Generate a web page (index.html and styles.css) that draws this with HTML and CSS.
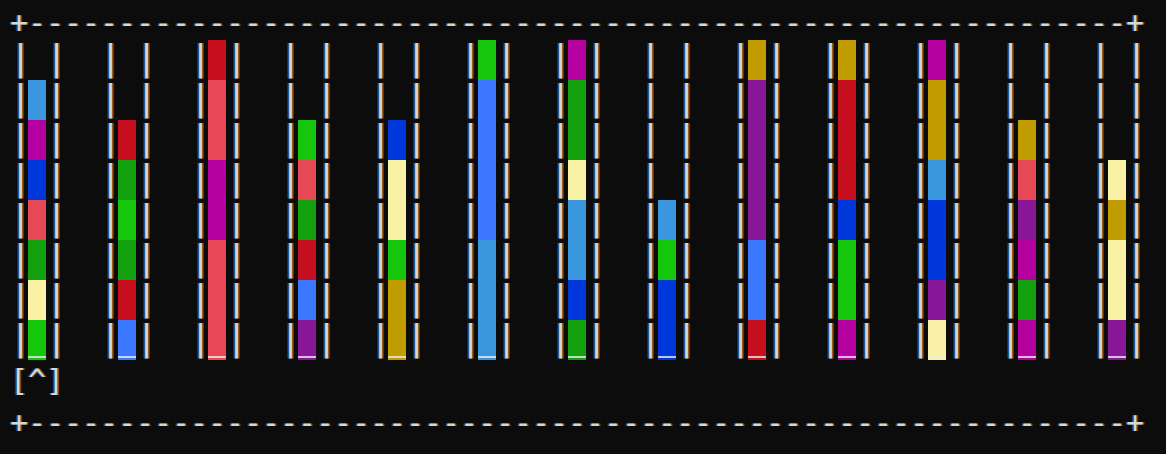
FILE: index.html
```html
<!DOCTYPE html>
<html>
<head>
<meta charset="utf-8">
<link rel="stylesheet" href="styles.css">
</head>
<body>
<div class="term">
  <div class="line border">+-------------------------------------------------------------+</div>
  <div class="tubes">
    <div class="tube"><div class="wall"><span>|</span><span>|</span><span>|</span><span>|</span><span>|</span><span>|</span><span>|</span><span>|</span></div><div class="fill"><i class="e"></i><i class="cy"></i><i class="mg"></i><i class="bl"></i><i class="br"></i><i class="gn"></i><i class="by"></i><i class="bg"></i></div><div class="wall"><span>|</span><span>|</span><span>|</span><span>|</span><span>|</span><span>|</span><span>|</span><span>|</span></div></div>
    <div class="tube"><div class="wall"><span>|</span><span>|</span><span>|</span><span>|</span><span>|</span><span>|</span><span>|</span><span>|</span></div><div class="fill"><i class="e"></i><i class="e"></i><i class="rd"></i><i class="gn"></i><i class="bg"></i><i class="gn"></i><i class="rd"></i><i class="bb"></i></div><div class="wall"><span>|</span><span>|</span><span>|</span><span>|</span><span>|</span><span>|</span><span>|</span><span>|</span></div></div>
    <div class="tube"><div class="wall"><span>|</span><span>|</span><span>|</span><span>|</span><span>|</span><span>|</span><span>|</span><span>|</span></div><div class="fill"><i class="rd"></i><i class="br"></i><i class="br"></i><i class="mg"></i><i class="mg"></i><i class="br"></i><i class="br"></i><i class="br"></i></div><div class="wall"><span>|</span><span>|</span><span>|</span><span>|</span><span>|</span><span>|</span><span>|</span><span>|</span></div></div>
    <div class="tube"><div class="wall"><span>|</span><span>|</span><span>|</span><span>|</span><span>|</span><span>|</span><span>|</span><span>|</span></div><div class="fill"><i class="e"></i><i class="e"></i><i class="bg"></i><i class="br"></i><i class="gn"></i><i class="rd"></i><i class="bb"></i><i class="pu"></i></div><div class="wall"><span>|</span><span>|</span><span>|</span><span>|</span><span>|</span><span>|</span><span>|</span><span>|</span></div></div>
    <div class="tube"><div class="wall"><span>|</span><span>|</span><span>|</span><span>|</span><span>|</span><span>|</span><span>|</span><span>|</span></div><div class="fill"><i class="e"></i><i class="e"></i><i class="bl"></i><i class="by"></i><i class="by"></i><i class="bg"></i><i class="ye"></i><i class="ye"></i></div><div class="wall"><span>|</span><span>|</span><span>|</span><span>|</span><span>|</span><span>|</span><span>|</span><span>|</span></div></div>
    <div class="tube"><div class="wall"><span>|</span><span>|</span><span>|</span><span>|</span><span>|</span><span>|</span><span>|</span><span>|</span></div><div class="fill"><i class="bg"></i><i class="bb"></i><i class="bb"></i><i class="bb"></i><i class="bb"></i><i class="cy"></i><i class="cy"></i><i class="cy"></i></div><div class="wall"><span>|</span><span>|</span><span>|</span><span>|</span><span>|</span><span>|</span><span>|</span><span>|</span></div></div>
    <div class="tube"><div class="wall"><span>|</span><span>|</span><span>|</span><span>|</span><span>|</span><span>|</span><span>|</span><span>|</span></div><div class="fill"><i class="mg"></i><i class="gn"></i><i class="gn"></i><i class="by"></i><i class="cy"></i><i class="cy"></i><i class="bl"></i><i class="gn"></i></div><div class="wall"><span>|</span><span>|</span><span>|</span><span>|</span><span>|</span><span>|</span><span>|</span><span>|</span></div></div>
    <div class="tube"><div class="wall"><span>|</span><span>|</span><span>|</span><span>|</span><span>|</span><span>|</span><span>|</span><span>|</span></div><div class="fill"><i class="e"></i><i class="e"></i><i class="e"></i><i class="e"></i><i class="cy"></i><i class="bg"></i><i class="bl"></i><i class="bl"></i></div><div class="wall"><span>|</span><span>|</span><span>|</span><span>|</span><span>|</span><span>|</span><span>|</span><span>|</span></div></div>
    <div class="tube"><div class="wall"><span>|</span><span>|</span><span>|</span><span>|</span><span>|</span><span>|</span><span>|</span><span>|</span></div><div class="fill"><i class="ye"></i><i class="pu"></i><i class="pu"></i><i class="pu"></i><i class="pu"></i><i class="bb"></i><i class="bb"></i><i class="rd"></i></div><div class="wall"><span>|</span><span>|</span><span>|</span><span>|</span><span>|</span><span>|</span><span>|</span><span>|</span></div></div>
    <div class="tube"><div class="wall"><span>|</span><span>|</span><span>|</span><span>|</span><span>|</span><span>|</span><span>|</span><span>|</span></div><div class="fill"><i class="ye"></i><i class="rd"></i><i class="rd"></i><i class="rd"></i><i class="bl"></i><i class="bg"></i><i class="bg"></i><i class="mg"></i></div><div class="wall"><span>|</span><span>|</span><span>|</span><span>|</span><span>|</span><span>|</span><span>|</span><span>|</span></div></div>
    <div class="tube"><div class="wall"><span>|</span><span>|</span><span>|</span><span>|</span><span>|</span><span>|</span><span>|</span><span>|</span></div><div class="fill"><i class="mg"></i><i class="ye"></i><i class="ye"></i><i class="cy"></i><i class="bl"></i><i class="bl"></i><i class="pu"></i><i class="by"></i></div><div class="wall"><span>|</span><span>|</span><span>|</span><span>|</span><span>|</span><span>|</span><span>|</span><span>|</span></div></div>
    <div class="tube"><div class="wall"><span>|</span><span>|</span><span>|</span><span>|</span><span>|</span><span>|</span><span>|</span><span>|</span></div><div class="fill"><i class="e"></i><i class="e"></i><i class="ye"></i><i class="br"></i><i class="pu"></i><i class="mg"></i><i class="gn"></i><i class="mg"></i></div><div class="wall"><span>|</span><span>|</span><span>|</span><span>|</span><span>|</span><span>|</span><span>|</span><span>|</span></div></div>
    <div class="tube"><div class="wall"><span>|</span><span>|</span><span>|</span><span>|</span><span>|</span><span>|</span><span>|</span><span>|</span></div><div class="fill"><i class="e"></i><i class="e"></i><i class="e"></i><i class="by"></i><i class="ye"></i><i class="by"></i><i class="by"></i><i class="pu"></i></div><div class="wall"><span>|</span><span>|</span><span>|</span><span>|</span><span>|</span><span>|</span><span>|</span><span>|</span></div></div>
  </div>
  <div class="line cursor">[^]</div>
  <div class="line border">+-------------------------------------------------------------+</div>
</div>
</body>
</html>
```

FILE: styles.css
```css
html, body {
  margin: 0;
  padding: 0;
  background: #0c0c0c;
}
body {
  padding: 0 10px;
}
.term {
  font-family: "DejaVu Sans Mono", monospace;
  color: #d4d8d0;
  text-shadow: -1.5px 0 #1d4c88, 1.5px 0 #7c4a1c;
}
.line {
  height: 40px;
  line-height: 40px;
  font-size: 30px;
  letter-spacing: -0.06px;
  white-space: pre;
}
.line.border {
  line-height: 45px;
}
.line.cursor {
  line-height: 42px;
}
.tubes {
  display: flex;
  gap: 36px;
}
.tube {
  display: flex;
}
.wall {
  display: flex;
  flex-direction: column;
  width: 18px;
}
.wall span {
  display: block;
  height: 40px;
  line-height: 36px;
  font-size: 35px;
  text-align: center;
}
.fill {
  display: flex;
  flex-direction: column;
  width: 18px;
}
.fill i {
  display: block;
  height: 40px;
}
.fill i:last-child {
  background-image: linear-gradient(to top, transparent 2px, rgba(236, 236, 236, 0.78) 2px, rgba(236, 236, 236, 0.78) 4px, transparent 4px);
}
.fill i.e { background-color: transparent; }
.cy { background-color: #3a96dd; }
.mg { background-color: #b4009e; }
.bl { background-color: #0037da; }
.br { background-color: #e74856; }
.gn { background-color: #13a10e; }
.by { background-color: #f9f1a5; }
.bg { background-color: #16c60c; }
.rd { background-color: #c50f1f; }
.bb { background-color: #3b78ff; }
.pu { background-color: #881798; }
.ye { background-color: #c19c00; }
```
